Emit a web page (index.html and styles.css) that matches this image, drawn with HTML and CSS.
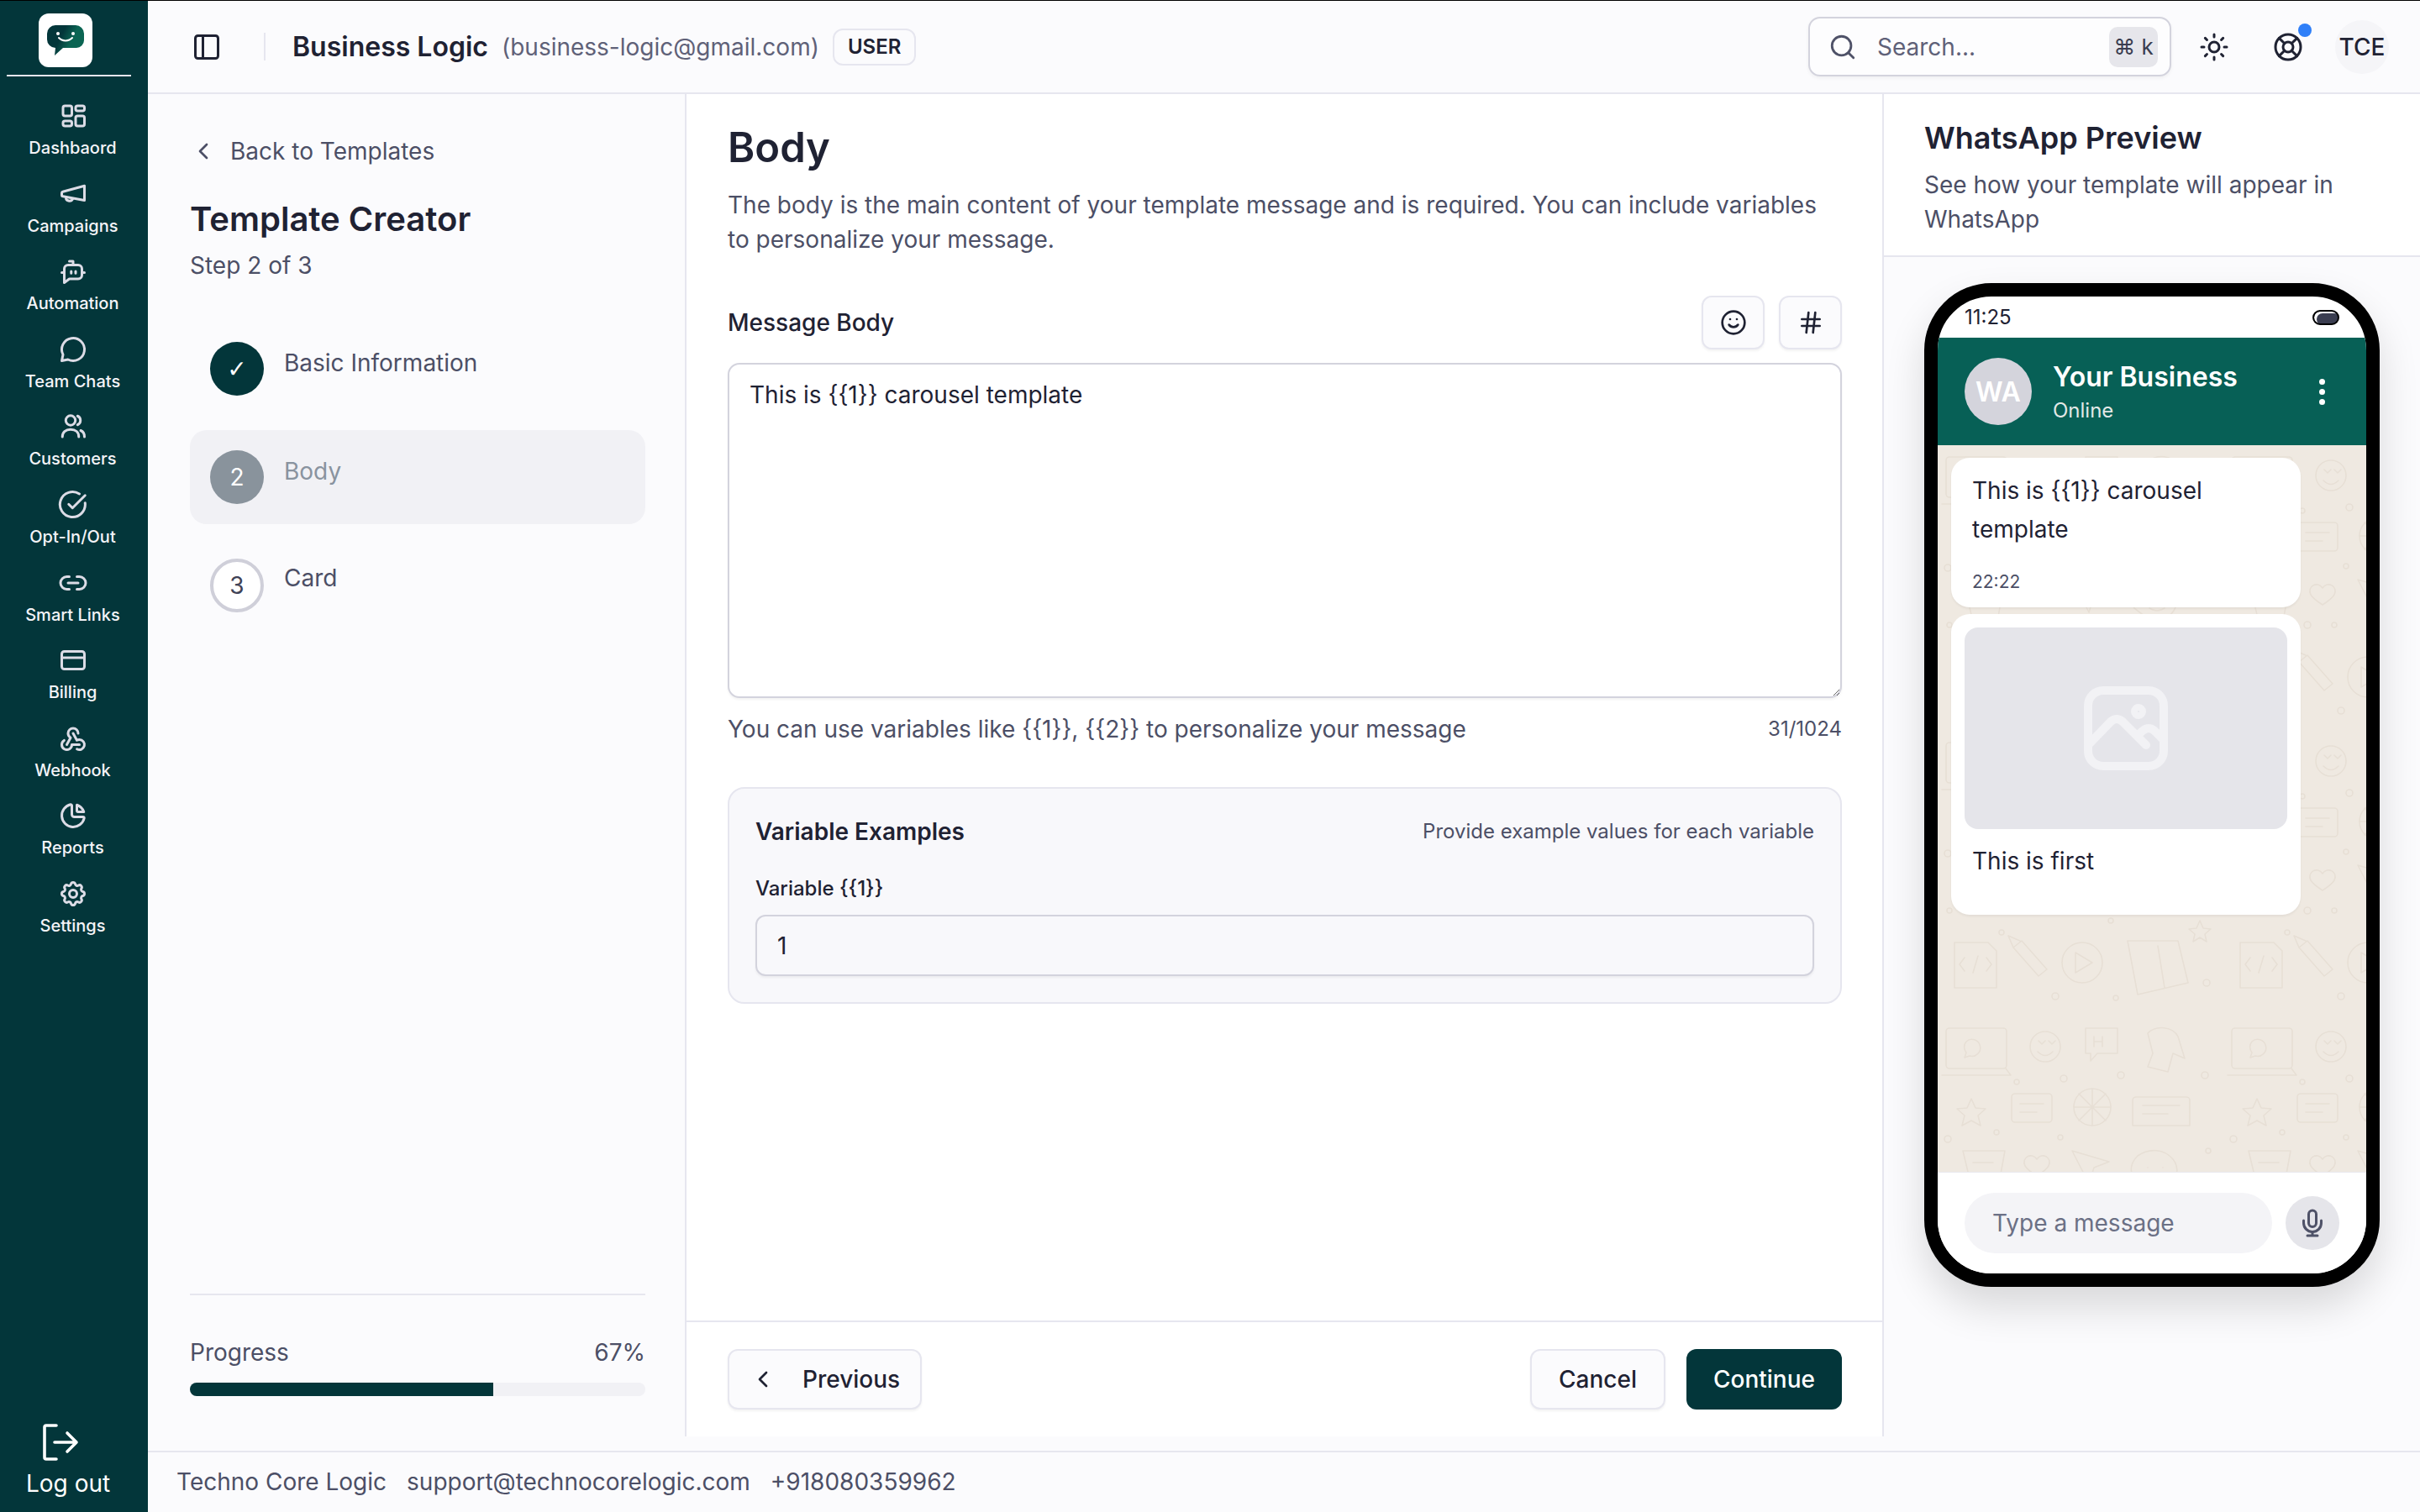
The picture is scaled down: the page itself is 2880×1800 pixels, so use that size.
FILE: index.html
```html
<!DOCTYPE html>
<html lang="en">
<head>
    <meta charset="UTF-8">
    <meta name="viewport" content="width=device-width, initial-scale=1.0">
    <title>Template Creator</title>
    <link rel="stylesheet" href="styles.css">
</head>
<body>
<div class="app">
    <aside class="sidebar">
        <div class="logo-wrap">
            <div class="logo">
                <svg viewBox="0 0 44 36" width="44" height="36">
                    <defs>
                        <linearGradient id="logoFill" x1="0" y1="0" x2="1" y2="0.4">
                            <stop offset="0.45" stop-color="#03363a"/>
                            <stop offset="0.75" stop-color="#0b6553"/>
                        </linearGradient>
                    </defs>
                    <path d="M10 0h24a10 10 0 0 1 10 10v8a9 9 0 0 1-9 9H19L9 36l1-9a10 10 0 0 1-10-10v-7A10 10 0 0 1 10 0z" fill="url(#logoFill)"/>
                    <circle cx="13" cy="10" r="2" fill="#fff"/>
                    <circle cx="31" cy="10" r="2" fill="#fff"/>
                    <path d="M14 15c4 4.500 12 4.500 16 0" fill="none" stroke="#fff" stroke-width="2" stroke-linecap="round"/>
                </svg>
            </div>
        </div>
        <nav class="nav">
            <a class="nav-item">
                <svg class="nav-icon" viewBox="0 0 24 24"><rect x="4" y="4" width="7" height="8" rx="1.5"/><rect x="4" y="16" width="7" height="4" rx="1.5"/><rect x="14" y="12" width="7" height="8" rx="1.5"/><rect x="14" y="4" width="7" height="4" rx="1.5"/></svg>
                <span>Dashbaord</span>
            </a>
            <a class="nav-item">
                <svg class="nav-icon" viewBox="0 0 24 24"><path d="M21 5.500v11.500L4 13.800a1 1 0 0 1-1-1v-1.600a1 1 0 0 1 .8-1z"/><path d="M6.500 14.500c-.6 3 3.800 4.200 5.300 1.200"/></svg>
                <span>Campaigns</span>
            </a>
            <a class="nav-item">
                <svg class="nav-icon" viewBox="0 0 24 24"><path d="M12 7V4H9"/><path d="M5 10a3 3 0 0 1 3-3h8a3 3 0 0 1 3 3v5a3 3 0 0 1-3 3H9l-4 3z"/><path d="M3 13h2M19 13h2M10.500 12v1.500M14 12v1.500"/></svg>
                <span>Automation</span>
            </a>
            <a class="nav-item">
                <svg class="nav-icon" viewBox="0 0 24 24"><path d="M7.900 20A9 9 0 1 0 4 16.100L3 21z"/></svg>
                <span>Team Chats</span>
            </a>
            <a class="nav-item">
                <svg class="nav-icon" viewBox="0 0 24 24"><circle cx="10" cy="7" r="3.800"/><path d="M3.500 20c0-3.600 2.500-5.800 6.500-5.800s6.500 2.200 6.500 5.800"/><path d="M15.500 3.500a3.800 3.800 0 0 1 0 7"/><path d="M21 20c0-2.400-1-4.200-3-5"/></svg>
                <span>Customers</span>
            </a>
            <a class="nav-item">
                <svg class="nav-icon" viewBox="0 0 24 24"><path d="M21.500 10.500A10 10 0 1 1 17 3.300"/><path d="m8.500 11.500 3 3L21.500 4.500"/></svg>
                <span>Opt-In/Out</span>
            </a>
            <a class="nav-item">
                <svg class="nav-icon" viewBox="0 0 24 24"><path d="M9 17H7A5 5 0 0 1 7 7h2"/><path d="M15 7h2a5 5 0 1 1 0 10h-2"/><path d="M8 12h8"/></svg>
                <span>Smart Links</span>
            </a>
            <a class="nav-item">
                <svg class="nav-icon" viewBox="0 0 24 24"><rect x="3" y="5" width="18" height="14" rx="2"/><path d="M3 10h18"/></svg>
                <span>Billing</span>
            </a>
            <a class="nav-item">
                <svg class="nav-icon" viewBox="0 0 24 24"><path d="M4.876 13.610a4 4 0 1 0 6.124 3.390h6"/><path d="M15.066 20.502a4 4 0 1 0 1.934-7.502c-.706 0-1.424.179-2 .5l-3-5.500"/><path d="M16 8a4 4 0 1 0-8 0c0 1.506.77 2.818 2 3.500l-3 5.500"/></svg>
                <span>Webhook</span>
            </a>
            <a class="nav-item">
                <svg class="nav-icon" viewBox="0 0 24 24"><path d="M10 3.200a9 9 0 1 0 10.800 10.800 1 1 0 0 0-1-1h-6.800a2 2 0 0 1-2-2v-7a.9.9 0 0 0-1-.8"/><path d="M15 3.500a9 9 0 0 1 5.500 5.500H16a1 1 0 0 1-1-1z"/></svg>
                <span>Reports</span>
            </a>
            <a class="nav-item">
                <svg class="nav-icon" viewBox="0 0 24 24"><path d="M10.325 4.317c.426-1.756 2.924-1.756 3.350 0a1.724 1.724 0 0 0 2.573 1.066c1.543-.94 3.310.826 2.370 2.370a1.724 1.724 0 0 0 1.065 2.572c1.756.426 1.756 2.924 0 3.350a1.724 1.724 0 0 0-1.066 2.573c.94 1.543-.826 3.310-2.370 2.370a1.724 1.724 0 0 0-2.572 1.065c-.426 1.756-2.924 1.756-3.350 0a1.724 1.724 0 0 0-2.573-1.066c-1.543.94-3.310-.826-2.370-2.370a1.724 1.724 0 0 0-1.065-2.572c-1.756-.426-1.756-2.924 0-3.350a1.724 1.724 0 0 0 1.066-2.573c-.94-1.543.826-3.310 2.370-2.370 1 .608 2.296.07 2.572-1.065z"/><circle cx="12" cy="12" r="3"/></svg>
                <span>Settings</span>
            </a>
        </nav>
        <a class="logout">
            <svg class="logout-icon" viewBox="0 0 44 44"><path d="M17 2H5a2 2 0 0 0-2 2v36a2 2 0 0 0 2 2h12"/><path d="M15 22h26M30 11l11 11-11 11"/></svg>
            <span>Log out</span>
        </a>
    </aside>

    <div class="content">
        <header class="topbar">
            <svg class="icon-toggle" viewBox="0 0 24 24"><rect x="3" y="3" width="18" height="18" rx="2"/><path d="M9 3v18"/></svg>
            <div class="topbar-sep"></div>
            <span class="account-name">Business Logic</span>
            <span class="account-email">(business-logic@gmail.com)</span>
            <span class="role-badge">USER</span>
            <div class="search">
                <svg class="search-icon" viewBox="0 0 24 24"><circle cx="11" cy="11" r="8"/><path d="m21 21-4.300-4.300"/></svg>
                <span class="search-text">Search...</span>
                <kbd class="search-key">⌘ k</kbd>
            </div>
            <svg class="icon-sun" viewBox="0 0 24 24"><circle cx="12" cy="12" r="4"/><path d="M12 2v2M12 20v2M4.900 4.900l1.400 1.400M17.700 17.700l1.400 1.400M2 12h2M20 12h2M6.300 17.700l-1.400 1.400M19.100 4.900l-1.400 1.400"/></svg>
            <div class="help">
                <svg class="icon-help" viewBox="0 0 24 24"><circle cx="12" cy="12" r="10"/><circle cx="12" cy="12" r="4"/><path d="m4.900 4.900 4.300 4.300M14.800 14.800l4.300 4.300M14.800 9.200l4.300-4.300M9.200 14.800l-4.300 4.300"/></svg>
                <span class="help-dot"></span>
            </div>
            <div class="avatar">TCE</div>
        </header>

        <main class="workspace">
            <section class="steps-panel">
                <a class="back-link">
                    <svg class="icon-back" viewBox="0 0 24 24"><path d="m15 18-6-6 6-6"/></svg>
                    Back to Templates
                </a>
                <h1 class="panel-title">Template Creator</h1>
                <p class="panel-sub">Step 2 of 3</p>
                <ul class="steps">
                    <li class="step step-done">
                        <span class="step-circle">✓</span>
                        <span class="step-label">Basic Information</span>
                    </li>
                    <li class="step step-current">
                        <span class="step-circle">2</span>
                        <span class="step-label">Body</span>
                    </li>
                    <li class="step step-todo">
                        <span class="step-circle">3</span>
                        <span class="step-label">Card</span>
                    </li>
                </ul>
                <div class="progress">
                    <div class="progress-head">
                        <span>Progress</span>
                        <span>67%</span>
                    </div>
                    <div class="progress-track"><div class="progress-fill" style="width: 66.6%"></div></div>
                </div>
            </section>

            <section class="editor">
                <div class="editor-body">
                    <h2 class="editor-title">Body</h2>
                    <p class="editor-desc">The body is the main content of your template message and is required. You can include variables to personalize your message.</p>

                    <div class="field-head">
                        <label class="field-label" for="messageBody">Message Body</label>
                        <div class="field-tools">
                            <button class="tool-btn">
                                <svg viewBox="0 0 24 24"><circle cx="12" cy="12" r="10"/><path d="M8 14s1.500 2 4 2 4-2 4-2"/><path d="M9 9h.01M15 9h.01"/></svg>
                            </button>
                            <button class="tool-btn">
                                <svg viewBox="0 0 24 24"><path d="M4 9h16M4 15h16M10 3 8 21M16 3l-2 18"/></svg>
                            </button>
                        </div>
                    </div>
                    <textarea class="message-input" id="messageBody">This is {{1}} carousel template</textarea>
                    <div class="hint-row">
                        <span>You can use variables like {{1}}, {{2}} to personalize your message</span>
                        <span class="char-count">31/1024</span>
                    </div>

                    <div class="var-card">
                        <div class="var-head">
                            <span class="var-title">Variable Examples</span>
                            <span class="var-note">Provide example values for each variable</span>
                        </div>
                        <div class="var-label">Variable {{1}}</div>
                        <div class="var-input">1</div>
                    </div>
                </div>
                <div class="editor-actions">
                    <button class="btn btn-prev">
                        <svg viewBox="0 0 24 24"><path d="m15 18-6-6 6-6"/></svg>
                        Previous
                    </button>
                    <button class="btn btn-cancel">Cancel</button>
                    <button class="btn btn-continue">Continue</button>
                </div>
            </section>

            <section class="preview">
                <div class="preview-head">
                    <h2 class="preview-title">WhatsApp Preview</h2>
                    <p class="preview-desc">See how your template will appear in WhatsApp</p>
                </div>
                <div class="preview-stage">
                    <div class="phone">
                        <div class="phone-status">
                            <span>11:25</span>
                            <span class="battery"></span>
                        </div>
                        <div class="wa-header">
                            <div class="wa-avatar">WA</div>
                            <div class="wa-info">
                                <div class="wa-name">Your Business</div>
                                <div class="wa-online">Online</div>
                            </div>
                            <div class="wa-menu"><i></i><i></i><i></i></div>
                        </div>
                        <div class="wa-chat">
                            <svg class="wa-doodles" width="100%" height="100%">
                                <defs>
                                    <pattern id="doodles" width="340" height="340" patternUnits="userSpaceOnUse">
                                        <g class="doodle-lines">
                                            <rect x="10" y="14" width="72" height="48" rx="4"/>
                                            <path d="M5 70h82l-6-8M34 30a10 10 0 1 1 4 17l-6 2 2-6a10 10 0 0 1 0-13z"/>
                                            <circle cx="128" cy="36" r="18"/>
                                            <path d="M119 42c6 6 12 6 18 0M120 29l4 4 4-4M132 29l4 4 4-4"/>
                                            <path d="M176 14h38v30h-24l-8 9v-9h-6zM186 24v12M196 24v12M186 30h10"/>
                                            <path d="M250 20c10-10 30-8 36 4l8 26-14-6-6 22-24-6 6-16z"/>
                                            <path d="M40 98l5 11 12 1-9 8 3 12-11-6-11 6 3-12-9-8 12-1z"/>
                                            <path d="M92 92h40a4 4 0 0 1 4 4v26a4 4 0 0 1-4 4H92a4 4 0 0 1-4-4V96a4 4 0 0 1 4-4zM98 104h28M98 114h20"/>
                                            <circle cx="184" cy="108" r="22"/>
                                            <path d="M184 86v44M162 108h44M168 92l32 32M200 92l-32 32"/>
                                            <path d="M236 96h60a4 4 0 0 1 4 4v30h-68v-30a4 4 0 0 1 4-4zM244 106h44M244 116h30"/>
                                            <path d="M30 160h50l-8 44-30 6z"/>
                                            <path d="M42 174h24M44 186h18"/>
                                            <path d="M118 170c-6-9-19-2-14 8 3 5 14 12 14 12s11-7 14-12c5-10-8-17-14-8z"/>
                                            <path d="M160 160l44 13-18 7-6 19z"/>
                                            <path d="M238 166c14-10 32-8 42 4 8 10 6 26-6 34l-22 4-18-14c-6-10-4-20 4-28zM250 180h.01M268 180h.01M252 194c6 4 12 4 18 0"/>
                                            <path d="M20 252h40l10 10v44H20zM32 270l-6 8 6 8M58 270l6 8-6 8M48 268l-6 20"/>
                                            <path d="M100 250l30 34-10 8-30-34zM90 258l-6-14 14 6"/>
                                            <circle cx="172" cy="276" r="24"/>
                                            <path d="M164 264l20 12-20 12z"/>
                                            <path d="M226 250h60l12 50-60 14zM262 256l8 50"/>
                                            <path d="M312 226l4 9 9 1-7 6 2 9-8-5-8 5 2-9-7-6 9-1z"/>
                                            <circle cx="94" cy="78" r="3"/><circle cx="150" cy="74" r="4"/><circle cx="12" cy="146" r="4"/><circle cx="146" cy="144" r="3"/><circle cx="218" cy="70" r="4"/><circle cx="70" cy="138" r="3"/><circle cx="100" cy="214" r="4"/><circle cx="14" cy="214" r="3"/><circle cx="132" cy="214" r="3"/><circle cx="318" cy="70" r="4"/><circle cx="322" cy="160" r="3"/><circle cx="206" cy="226" r="3"/><circle cx="76" cy="240" r="3"/><circle cx="140" cy="316" r="4"/><circle cx="212" cy="318" r="3"/><circle cx="320" cy="300" r="4"/>
                                        </g>
                                    </pattern>
                                </defs>
                                <rect class="doodle-fill" width="100%" height="100%" fill="url(#doodles)"/>
                            </svg>
                            <div class="bubble">
                                <p class="bubble-text">This is {{1}} carousel template</p>
                                <div class="bubble-time">22:22</div>
                            </div>
                            <div class="bubble bubble-card">
                                <div class="card-image">
                                    <svg viewBox="0 0 100 100"><rect x="5" y="5" width="90" height="90" rx="18"/><circle cx="65" cy="30" r="4"/><path d="M5 70 32 42c5-4 9-4 14 0l28 28"/><path d="m64 58 6-5c5-4 9-4 14 0l11 11"/></svg>
                                </div>
                                <p class="bubble-text card-text">This is first</p>
                            </div>
                        </div>
                        <div class="wa-input">
                            <div class="wa-field">Type a message</div>
                            <div class="wa-mic">
                                <svg viewBox="0 0 24 24"><path d="M12 2a3 3 0 0 0-3 3v7a3 3 0 0 0 6 0V5a3 3 0 0 0-3-3z"/><path d="M19 10v2a7 7 0 0 1-14 0v-2"/><path d="M12 19v3M8 22h8"/></svg>
                            </div>
                        </div>
                    </div>
                </div>
            </section>
        </main>

        <footer class="footer">
            <span>Techno Core Logic</span>
            <span>support@technocorelogic.com</span>
            <span>+918080359962</span>
        </footer>
    </div>
</div>
</body>
</html>
```
FILE: styles.css
```css
* {
    box-sizing: border-box;
}

body {
    margin: 0;
    font-family: Inter, "Noto Sans", sans-serif;
    color: #1f2233;
    background-color: #fbfbfd;
}

svg {
    fill: none;
    stroke: currentColor;
    stroke-width: 2;
    stroke-linecap: round;
    stroke-linejoin: round;
}

.app {
    display: flex;
    height: 1800px;
    overflow: hidden;
    border-top: 1px solid #000;
}

/* sidebar */
.sidebar {
    width: 176px;
    flex-shrink: 0;
    display: flex;
    flex-direction: column;
    background-color: #03363a;
    color: #f4f4f8;
}

.logo-wrap {
    margin: 15px 20px 0 8px;
    padding: 0 0 9px 38px;
    border-bottom: 2px solid #e6e6ef;
}

.logo {
    width: 64px;
    height: 64px;
    display: flex;
    align-items: center;
    justify-content: center;
    background-color: #fff;
    border-radius: 12px;
}

.logo svg {
    stroke: none;
    stroke-width: 0;
}

.nav {
    display: flex;
    flex-direction: column;
    gap: 24.6px;
    padding: 29px 3px 0 0;
}

.nav-item {
    display: flex;
    flex-direction: column;
    align-items: center;
    gap: 8px;
    font-size: 20px;
    font-weight: 500;
    line-height: 24px;
    height: 68px;
}

.nav-icon {
    width: 36px;
    height: 36px;
    color: #dcdce6;
}

.logout {
    margin-top: auto;
    display: flex;
    flex-direction: column;
    align-items: flex-start;
    gap: 9px;
    padding: 0 0 16px 31px;
    color: #fff;
    font-size: 28px;
    line-height: 36px;
}

.logout-icon {
    width: 44px;
    height: 44px;
    margin-left: 19px;
    stroke-width: 3.600;
}

/* top bar */
.content {
    flex: 1;
    min-width: 0;
    display: flex;
    flex-direction: column;
}

.topbar {
    height: 111px;
    flex-shrink: 0;
    display: flex;
    align-items: center;
    padding: 0 37px 0 52px;
    border-bottom: 2px solid #e6e6ef;
    background-color: #fbfbfd;
}

.icon-toggle {
    width: 36px;
    height: 36px;
    color: #1f2233;
}

.topbar-sep {
    width: 2px;
    height: 33px;
    margin: 0 32px 0 50px;
    background-color: #e6e6ef;
}

.account-name {
    font-size: 32px;
    font-weight: 600;
}

.account-email {
    margin-left: 16px;
    font-size: 28px;
    color: #5f6178;
}

.role-badge {
    margin-left: 16px;
    height: 44px;
    padding: 0 16px;
    display: flex;
    align-items: center;
    font-size: 24px;
    font-weight: 600;
    border: 2px solid #e6e6ef;
    border-radius: 12px;
}

.search {
    margin-left: auto;
    width: 432px;
    height: 71px;
    display: flex;
    align-items: center;
    padding: 0 14px 0 22px;
    background-color: #fdfdfe;
    border: 2px solid #d3d3dd;
    border-radius: 14px;
    box-shadow: 0 2px 4px rgba(0, 0, 0, 0.05);
}

.search-icon {
    width: 34px;
    height: 34px;
    color: #4f5268;
}

.search-text {
    margin-left: 24px;
    font-size: 28px;
    color: #5f6178;
}

.search-key {
    margin-left: auto;
    width: 58px;
    height: 48px;
    display: flex;
    align-items: center;
    justify-content: center;
    font-family: Inter, "DejaVu Sans", sans-serif;
    font-size: 26px;
    color: #3a3d50;
    background-color: #e6e6eb;
    border-radius: 10px;
}

.icon-sun {
    width: 36px;
    height: 36px;
    margin-left: 33px;
    color: #1f2233;
}

.help {
    position: relative;
    margin-left: 52px;
    width: 36px;
    height: 36px;
}

.icon-help {
    width: 36px;
    height: 36px;
    color: #1f2233;
}

.help-dot {
    position: absolute;
    top: -10px;
    right: -10px;
    width: 16px;
    height: 16px;
    border-radius: 50%;
    background-color: #2f7ff8;
}

.avatar {
    margin-left: 38px;
    width: 64px;
    height: 64px;
    display: flex;
    align-items: center;
    justify-content: center;
    border-radius: 50%;
    font-size: 28px;
    font-weight: 500;
    background-color: #f5f5f8;
}

/* three columns */
.workspace {
    flex: 1;
    min-height: 0;
    display: flex;
    margin-bottom: 17px;
}

.steps-panel {
    width: 641px;
    flex-shrink: 0;
    display: flex;
    flex-direction: column;
    padding: 48px 47px 48px 50px;
    border-right: 2px solid #e6e6ef;
    background-color: #fbfbfd;
}

.back-link {
    display: flex;
    align-items: center;
    gap: 16px;
    font-size: 28px;
    line-height: 40px;
    color: #4c4f66;
}

.icon-back {
    width: 32px;
    height: 32px;
}

.panel-title {
    margin: 33px 0 0;
    font-size: 40px;
    font-weight: 600;
    line-height: 56px;
}

.panel-sub {
    margin: 7px 0 0;
    font-size: 28px;
    line-height: 40px;
    color: #4c4f66;
}

.steps {
    list-style: none;
    margin: 47px 0 0;
    padding: 0;
    display: flex;
    flex-direction: column;
    gap: 17px;
}

.step {
    height: 112px;
    display: flex;
    align-items: flex-start;
    gap: 24px;
    padding: 24px;
    border-radius: 20px;
}

.step-circle {
    width: 64px;
    height: 64px;
    flex-shrink: 0;
    display: flex;
    align-items: center;
    justify-content: center;
    border-radius: 50%;
    font-size: 28px;
}

.step-label {
    margin-top: 5px;
    font-size: 28px;
    line-height: 40px;
    color: #4c4f66;
}

.step-done .step-circle {
    font-family: "DejaVu Sans", sans-serif;
    background-color: #03363a;
    color: #fff;
}

.step-current {
    background-color: #f1f1f5;
}

.step-current .step-circle {
    background-color: #89939c;
    color: #fff;
}

.step-current .step-label {
    color: #89939f;
}

.step-todo .step-circle {
    background-color: #fff;
    border: 4px solid #cfcfd9;
    color: #3f4256;
}

.step-todo .step-label {
    margin-top: 3px;
}

.progress {
    margin-top: auto;
    padding-top: 48px;
    border-top: 2px solid #e6e6ef;
}

.progress-head {
    display: flex;
    justify-content: space-between;
    font-size: 28px;
    line-height: 40px;
    color: #4c4f66;
}

.progress-track {
    margin-top: 16px;
    height: 16px;
    border-radius: 8px;
    overflow: hidden;
    background-color: #f1f1f5;
}

.progress-fill {
    height: 100%;
    background-color: #03363a;
}

/* editor */
.editor {
    flex: 1;
    min-width: 0;
    display: flex;
    flex-direction: column;
    background-color: #fff;
}

.editor-body {
    flex: 1;
    padding: 34px 48px 0 49px;
}

.editor-title {
    margin: 0;
    font-size: 49px;
    font-weight: 600;
    line-height: 60px;
}

.editor-desc {
    margin: 18px 0 0;
    font-size: 28px;
    line-height: 41px;
    color: #4c4f66;
}

.field-head {
    margin-top: 46px;
    display: flex;
    align-items: center;
    justify-content: space-between;
}

.field-label {
    font-size: 28px;
    font-weight: 500;
}

.field-tools {
    display: flex;
    gap: 17px;
}

.tool-btn {
    width: 75px;
    height: 64px;
    display: flex;
    align-items: center;
    justify-content: center;
    padding: 0;
    color: #1f2233;
    background-color: #fbfbfd;
    border: 2px solid #e6e6ef;
    border-radius: 12px;
    box-shadow: 0 2px 3px rgba(0, 0, 0, 0.05);
}

.tool-btn svg {
    width: 32px;
    height: 32px;
}

.message-input {
    display: block;
    width: 100%;
    height: 399px;
    margin-top: 16px;
    padding: 16px 24px;
    font-family: inherit;
    font-size: 28px;
    line-height: 40px;
    color: #1f2233;
    background-color: #fff;
    border: 2px solid #d3d3dd;
    border-radius: 14px;
    box-shadow: 0 2px 3px rgba(0, 0, 0, 0.05);
    outline: none;
}

.hint-row {
    margin-top: 17px;
    display: flex;
    align-items: center;
    justify-content: space-between;
    font-size: 28px;
    line-height: 40px;
    color: #4c4f66;
}

.char-count {
    font-size: 24px;
}

.var-card {
    margin-top: 49px;
    padding: 31px;
    background-color: #f8f8fb;
    border: 2px solid #e6e6ef;
    border-radius: 20px;
}

.var-head {
    display: flex;
    align-items: center;
    justify-content: space-between;
    line-height: 40px;
}

.var-title {
    font-size: 28px;
    font-weight: 600;
}

.var-note {
    font-size: 24px;
    color: #4c4f66;
}

.var-label {
    margin-top: 32px;
    font-size: 24px;
    font-weight: 500;
    line-height: 32px;
}

.var-input {
    margin-top: 15px;
    height: 73px;
    display: flex;
    align-items: center;
    padding: 0 24px;
    font-size: 28px;
    background-color: #f8f8fb;
    border: 2px solid #d3d3dd;
    border-radius: 12px;
    box-shadow: 0 2px 3px rgba(0, 0, 0, 0.05);
}

.editor-actions {
    display: flex;
    align-items: center;
    gap: 25px;
    height: 138px;
    padding: 0 48px 0 49px;
    border-top: 2px solid #e6e6ef;
}

.btn {
    height: 72px;
    display: flex;
    align-items: center;
    padding: 0 32px;
    font-family: inherit;
    font-size: 28px;
    font-weight: 500;
    border-radius: 12px;
}

.btn-prev,
.btn-cancel {
    color: #1f2233;
    background-color: #fbfbfd;
    border: 2px solid #e6e6ef;
    box-shadow: 0 2px 3px rgba(0, 0, 0, 0.05);
}

.btn-prev {
    gap: 31px;
    margin-right: auto;
    padding: 0 24px;
}

.btn-prev svg {
    width: 32px;
    height: 32px;
}

.btn-continue {
    color: #fff;
    background-color: #03363a;
    border: none;
}

/* phone preview */
.preview {
    width: 640px;
    flex-shrink: 0;
    display: flex;
    flex-direction: column;
    border-left: 2px solid #e6e6ef;
    background-color: #fff;
}

.preview-head {
    height: 194px;
    padding: 26px 48px 0;
    border-bottom: 2px solid #e6e6ef;
}

.preview-title {
    margin: 0;
    font-size: 36px;
    font-weight: 600;
    line-height: 52px;
}

.preview-desc {
    margin: 10px 0 0;
    font-size: 28px;
    line-height: 41px;
    color: #4c4f66;
}

.preview-stage {
    flex: 1;
    padding: 31px 48px 0;
    background-color: #fbfbfd;
}

.phone {
    width: 542px;
    height: 1195px;
    display: flex;
    flex-direction: column;
    overflow: hidden;
    background-color: #fff;
    border: 16px solid #000;
    border-radius: 80px;
    box-shadow: 0 24px 48px rgba(0, 0, 0, 0.14);
}

.phone-status {
    height: 49px;
    flex-shrink: 0;
    display: flex;
    align-items: center;
    justify-content: space-between;
    padding: 0 32px;
    font-size: 24px;
}

.battery {
    width: 32px;
    height: 18px;
    border: 2px solid #000;
    border-radius: 9px;
    background-color: #3a3d50;
    box-shadow: inset 3px 2px 0 #fff;
}

.wa-header {
    height: 128px;
    flex-shrink: 0;
    display: flex;
    align-items: center;
    padding: 0 32px;
    color: #fff;
    background-color: #076056;
}

.wa-avatar {
    width: 80px;
    height: 80px;
    display: flex;
    align-items: center;
    justify-content: center;
    border-radius: 50%;
    font-size: 32px;
    font-weight: 600;
    background-color: #d4d4dc;
}

.wa-info {
    margin-left: 25px;
}

.wa-name {
    font-size: 32px;
    font-weight: 600;
    line-height: 42px;
}

.wa-online {
    margin-top: 3px;
    font-size: 24px;
    line-height: 32px;
    color: #e2e8e6;
}

.wa-menu {
    margin-left: auto;
    margin-right: 17px;
    display: flex;
    flex-direction: column;
    gap: 5px;
}

.wa-menu i {
    display: block;
    width: 7px;
    height: 7px;
    border-radius: 50%;
    background-color: #fff;
}

.wa-chat {
    position: relative;
    flex: 1;
    padding: 15px 78px 0 16px;
    background-color: #efe9e1;
}

.wa-doodles {
    position: absolute;
    top: 0;
    left: 0;
    stroke: none;
}

.doodle-lines {
    fill: none;
    stroke: #e7dfd5;
    stroke-width: 1.600;
}

.doodle-fill {
    stroke: none;
}

.bubble {
    position: relative;
    height: 178px;
    padding: 16px 25px;
    background-color: #fff;
    border-radius: 22px;
    box-shadow: 0 2px 3px rgba(0, 0, 0, 0.05);
}

.bubble-text {
    margin: 0;
    font-size: 28px;
    line-height: 46px;
}

.bubble-time {
    margin-top: 26px;
    font-size: 21px;
    line-height: 28px;
    color: #4c4f66;
}

.bubble-card {
    height: 358px;
    margin-top: 8px;
    padding: 16px;
}

.card-image {
    height: 240px;
    display: flex;
    align-items: center;
    justify-content: center;
    background-color: #e5e5ea;
    border-radius: 16px;
}

.card-image svg {
    width: 100px;
    height: 100px;
    color: #f2f2f5;
    stroke-width: 10;
}

.card-text {
    margin: 15px 0 0 9px;
}

.wa-input {
    height: 121px;
    flex-shrink: 0;
    display: flex;
    align-items: center;
    gap: 16px;
    padding: 0 32px;
    border-top: 1px solid #e9e9ee;
    background-color: #fff;
}

.wa-field {
    flex: 1;
    height: 72px;
    display: flex;
    align-items: center;
    padding: 0 33px;
    font-size: 28px;
    color: #6b7085;
    background-color: #f4f4f7;
    border-radius: 36px;
}

.wa-mic {
    width: 64px;
    height: 64px;
    display: flex;
    align-items: center;
    justify-content: center;
    border-radius: 50%;
    color: #4f5268;
    background-color: #e5e5ea;
}

.wa-mic svg {
    width: 36px;
    height: 36px;
}

/* footer */
.footer {
    height: 73px;
    flex-shrink: 0;
    display: flex;
    align-items: center;
    gap: 24px;
    padding: 0 34px 2px;
    font-size: 28px;
    color: #4c4f66;
    border-top: 2px solid #e6e6ef;
    background-color: #fbfbfd;
}
```
